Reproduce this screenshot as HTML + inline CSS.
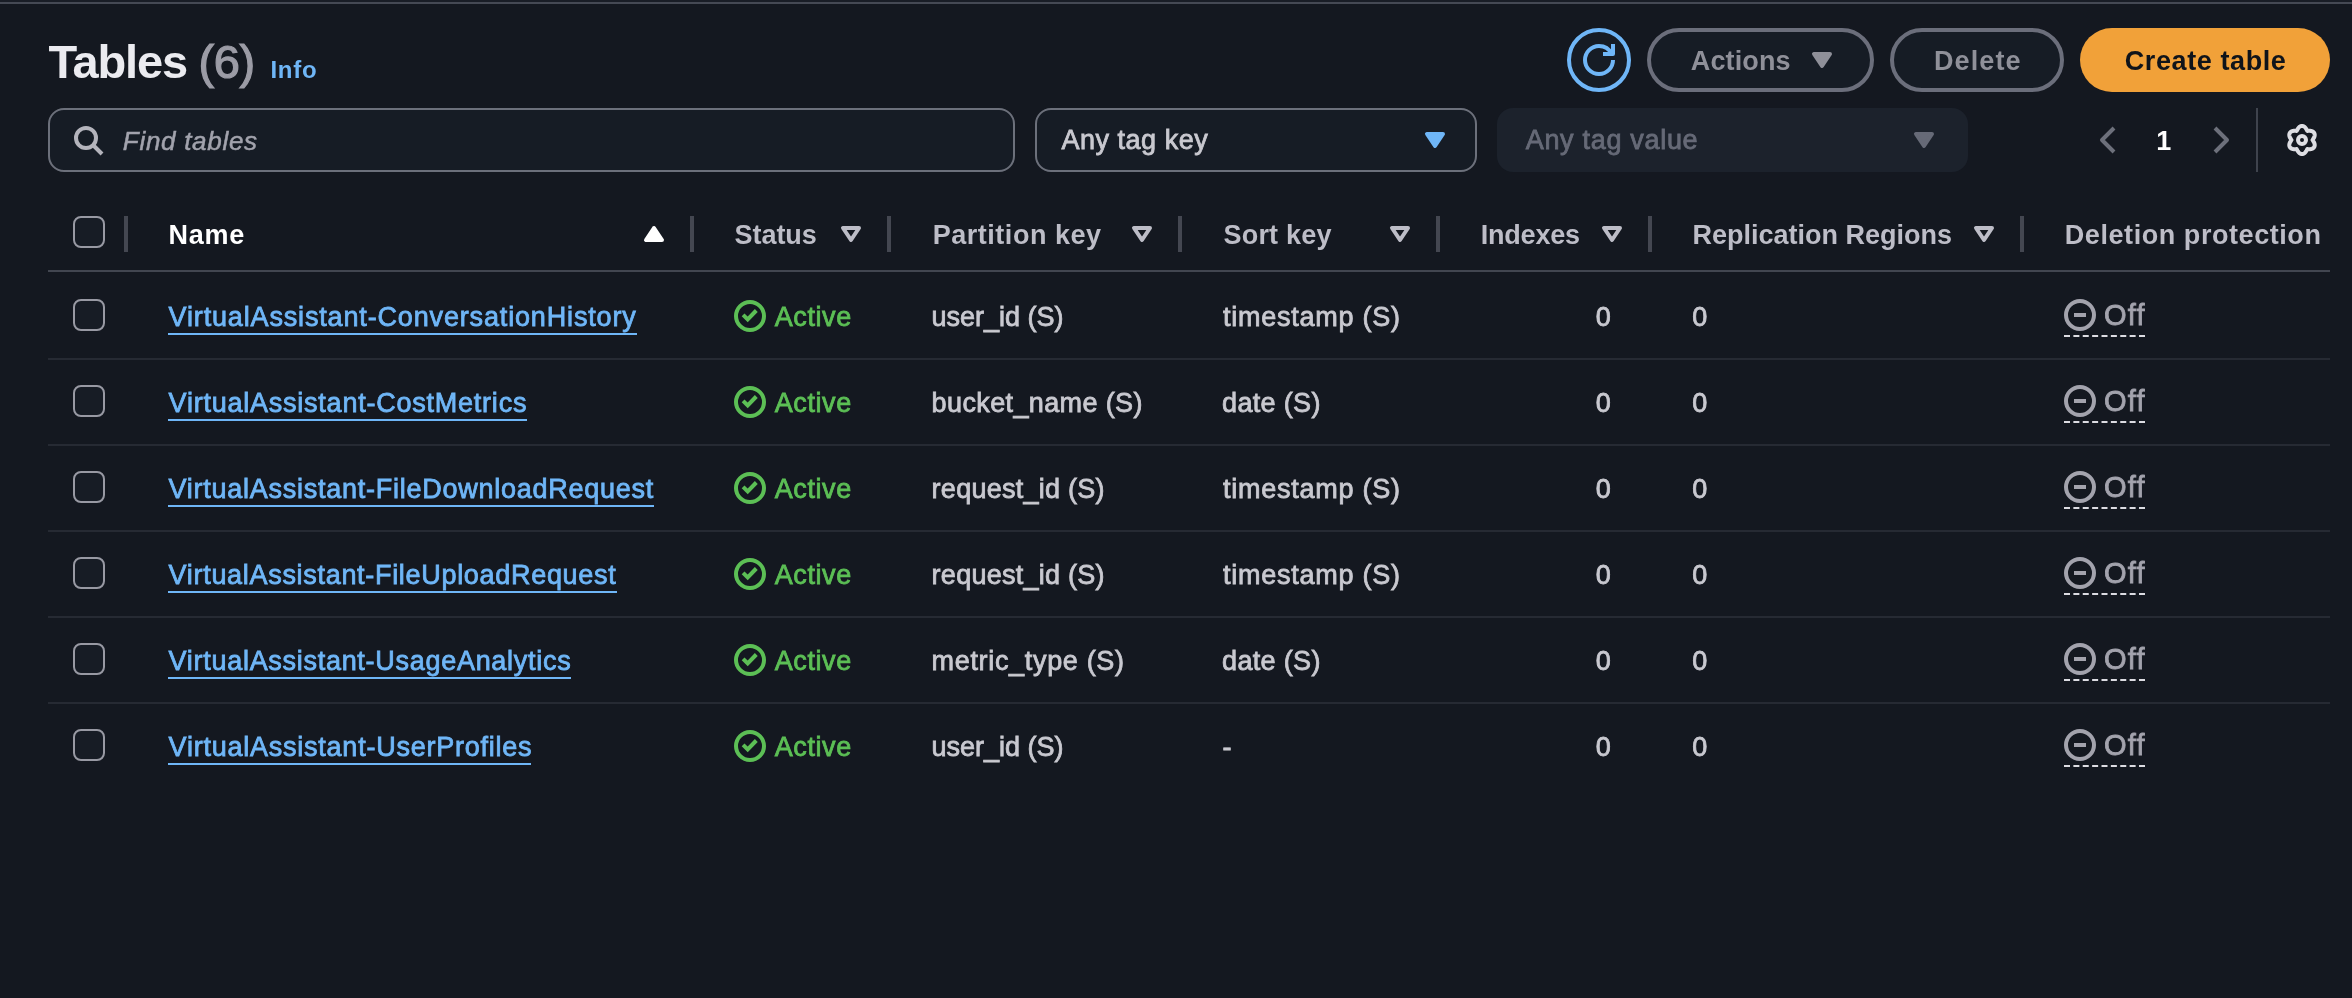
<!DOCTYPE html>
<html lang="en"><head><meta charset="utf-8"><title>Tables - DynamoDB</title>
<style>
html,body{margin:0;padding:0;}
body{width:2352px;height:998px;overflow:hidden;background:#141820;font-family:'Liberation Sans', sans-serif;position:relative;-webkit-font-smoothing:antialiased;}
.app{position:absolute;left:0;top:0;width:2352px;height:998px;will-change:transform;}
.tx{position:absolute;white-space:pre;margin:0;}
.bx,.ic{position:absolute;box-sizing:border-box;display:block;}
.lnk{text-decoration:none;}
.ul{position:absolute;height:2px;background:#6fb6f7;}
.cb{position:absolute;box-sizing:border-box;width:32px;height:32px;border:2px solid #9899a3;border-radius:8px;background:#171c25;}
.dv{position:absolute;width:4px;height:36px;top:216px;background:#444751;}
.rl{position:absolute;left:48px;width:2282px;height:2px;background:#262a33;}
.dash{position:absolute;height:0;border-top:2px dashed #dcdce2;}
</style></head><body><div class="app">
<div class="bx" style="left:0;top:0;width:2352px;height:2px;background:#191d26"></div>
<div class="bx" style="left:0;top:2px;width:2352px;height:2px;background:#454954"></div>
<!-- toolbar -->
<div class="bx" style="left:1567px;top:28px;width:64px;height:64px;border:4px solid #6fb6f7;border-radius:32px;background:#161c25"></div>
<svg class="ic" style="left:1583px;top:44px" width="32" height="32" viewBox="0 0 16 16" fill="none" stroke="#6fb6f7" stroke-width="2" stroke-linejoin="round" ><path d="M15 8c0 3.87-3.13 7-7 7s-7-3.13-7-7 3.13-7 7-7c2.79 0 5.2 1.63 6.33 4"/><path d="M10 5h5V0"/></svg>
<div class="bx" style="left:1647px;top:28px;width:227px;height:64px;border:4px solid #6b6e7b;border-radius:32px;background:#161c25"></div>
<svg class="ic" style="left:1806px;top:44px" width="32" height="32" viewBox="0 0 16 16" fill="none" stroke="#8f9099" stroke-width="2" stroke-linejoin="round" ><path d="M4 5h8l-4 6-4-6z" fill="#8f9099"/></svg>
<div class="bx" style="left:1890px;top:28px;width:174px;height:64px;border:4px solid #6b6e7b;border-radius:32px;background:#161c25"></div>
<div class="bx" style="left:2080px;top:28px;width:250px;height:64px;border-radius:32px;background:#f1a139"></div>
<!-- filters -->
<div class="bx" style="left:48px;top:108px;width:967px;height:64px;border:2px solid #6c707b;border-radius:16px;background:#161c25"></div>
<svg class="ic" style="left:72px;top:124px" width="32" height="32" viewBox="0 0 16 16" fill="none" stroke="#b4b4bc" stroke-width="2" stroke-linejoin="round" ><circle cx="7" cy="7" r="5"/><path d="m15 15-4.5-4.5"/></svg>
<div class="bx" style="left:1035px;top:108px;width:442px;height:64px;border:2px solid #6c707b;border-radius:16px;background:#161c25"></div>
<svg class="ic" style="left:1419px;top:124px" width="32" height="32" viewBox="0 0 16 16" fill="none" stroke="#6fb6f7" stroke-width="2" stroke-linejoin="round" ><path d="M4 5h8l-4 6-4-6z" fill="#6fb6f7"/></svg>
<div class="bx" style="left:1497px;top:108px;width:471px;height:64px;border-radius:16px;background:#1c222c"></div>
<svg class="ic" style="left:1908px;top:124px" width="32" height="32" viewBox="0 0 16 16" fill="none" stroke="#666a77" stroke-width="2" stroke-linejoin="round" ><path d="M4 5h8l-4 6-4-6z" fill="#666a77"/></svg>
<svg class="ic" style="left:2092px;top:124px" width="32" height="32" viewBox="0 0 16 16" fill="none" stroke="#6d707b" stroke-width="2" stroke-linejoin="round" stroke-linejoin="miter"><path d="M11 2 5 8l6 6"/></svg>
<svg class="ic" style="left:2204.5px;top:124px" width="32" height="32" viewBox="0 0 16 16" fill="none" stroke="#6d707b" stroke-width="2" stroke-linejoin="round" stroke-linejoin="miter"><path d="m5 2 6 6-6 6"/></svg>
<div class="bx" style="left:2256px;top:108px;width:2px;height:64px;background:#3f434d"></div>
<svg class="ic" style="left:2286px;top:124px" width="32" height="32" viewBox="0 0 16 16" fill="none" stroke="#dedee3" stroke-width="2" stroke-linejoin="round" ><path d="M13.25 8.00 L13.48 7.64 L13.75 7.24 L14.00 6.81 L14.20 6.34 L14.33 5.85 L14.36 5.37 L14.28 4.90 L14.11 4.48 L13.83 4.11 L13.46 3.81 L13.02 3.59 L12.54 3.46 L12.03 3.40 L11.53 3.40 L11.05 3.44 L10.62 3.45 L10.43 3.08 L10.22 2.64 L9.97 2.21 L9.66 1.80 L9.30 1.45 L8.90 1.18 L8.46 1.01 L8.00 0.95 L7.54 1.01 L7.10 1.18 L6.70 1.45 L6.34 1.80 L6.03 2.21 L5.78 2.64 L5.57 3.08 L5.38 3.45 L4.95 3.44 L4.47 3.40 L3.97 3.40 L3.46 3.46 L2.98 3.59 L2.54 3.81 L2.17 4.11 L1.89 4.48 L1.72 4.90 L1.64 5.37 L1.67 5.85 L1.80 6.34 L2.00 6.81 L2.25 7.24 L2.52 7.64 L2.75 8.00 L2.52 8.36 L2.25 8.76 L2.00 9.19 L1.80 9.66 L1.67 10.15 L1.64 10.63 L1.72 11.10 L1.89 11.52 L2.17 11.89 L2.54 12.19 L2.98 12.41 L3.46 12.54 L3.97 12.60 L4.47 12.60 L4.95 12.56 L5.37 12.55 L5.57 12.92 L5.78 13.36 L6.03 13.79 L6.34 14.20 L6.70 14.55 L7.10 14.82 L7.54 14.99 L8.00 15.05 L8.46 14.99 L8.90 14.82 L9.30 14.55 L9.66 14.20 L9.97 13.79 L10.22 13.36 L10.43 12.92 L10.62 12.55 L11.05 12.56 L11.53 12.60 L12.03 12.60 L12.54 12.54 L13.02 12.41 L13.46 12.19 L13.83 11.89 L14.11 11.53 L14.28 11.10 L14.36 10.63 L14.33 10.15 L14.20 9.66 L14.00 9.19 L13.75 8.76 L13.48 8.36Z"/><circle cx="8" cy="8" r="2"/></svg>
<div class="cb" style="left:73px;top:216px"></div>
<div class="dv" style="left:124px"></div>
<div class="dv" style="left:690px"></div>
<div class="dv" style="left:887px"></div>
<div class="dv" style="left:1178px"></div>
<div class="dv" style="left:1436px"></div>
<div class="dv" style="left:1648px"></div>
<div class="dv" style="left:2020px"></div>
<svg class="ic" style="left:638px;top:218px" width="32" height="32" viewBox="0 0 16 16" fill="none" stroke="#ffffff" stroke-width="2" stroke-linejoin="round" ><path d="M4 11h8L8 5l-4 6z" fill="#ffffff"/></svg>
<svg class="ic" style="left:835px;top:218px" width="32" height="32" viewBox="0 0 16 16" fill="none" stroke="#bdbdc7" stroke-width="2" stroke-linejoin="round" ><path d="M4 5h8l-4 6-4-6z"/></svg>
<svg class="ic" style="left:1126px;top:218px" width="32" height="32" viewBox="0 0 16 16" fill="none" stroke="#bdbdc7" stroke-width="2" stroke-linejoin="round" ><path d="M4 5h8l-4 6-4-6z"/></svg>
<svg class="ic" style="left:1384px;top:218px" width="32" height="32" viewBox="0 0 16 16" fill="none" stroke="#bdbdc7" stroke-width="2" stroke-linejoin="round" ><path d="M4 5h8l-4 6-4-6z"/></svg>
<svg class="ic" style="left:1596px;top:218px" width="32" height="32" viewBox="0 0 16 16" fill="none" stroke="#bdbdc7" stroke-width="2" stroke-linejoin="round" ><path d="M4 5h8l-4 6-4-6z"/></svg>
<svg class="ic" style="left:1968px;top:218px" width="32" height="32" viewBox="0 0 16 16" fill="none" stroke="#bdbdc7" stroke-width="2" stroke-linejoin="round" ><path d="M4 5h8l-4 6-4-6z"/></svg>
<div class="rl" style="top:270px;background:#424650"></div>
<div class="cb" style="left:73px;top:299.0px"></div>
<svg class="ic" style="left:734px;top:300.0px" width="32" height="32" viewBox="0 0 16 16" fill="none" stroke="#5cbf55" stroke-width="2"><circle cx="8" cy="8" r="7"/><path d="M4.55 7.45 L6.85 9.75 L11.15 5.25" stroke-linejoin="miter"/></svg>
<svg class="ic" style="left:2064px;top:299.0px" width="32" height="32" viewBox="0 0 16 16" fill="none" stroke="#a3a3ad" stroke-width="2"><circle cx="8" cy="8" r="7"/><path d="M5 8 H11"/></svg>
<div class="dash" style="left:2064px;width:81px;top:335.0px"></div>
<div class="rl" style="top:358px"></div>
<div class="cb" style="left:73px;top:385.0px"></div>
<svg class="ic" style="left:734px;top:386.0px" width="32" height="32" viewBox="0 0 16 16" fill="none" stroke="#5cbf55" stroke-width="2"><circle cx="8" cy="8" r="7"/><path d="M4.55 7.45 L6.85 9.75 L11.15 5.25" stroke-linejoin="miter"/></svg>
<svg class="ic" style="left:2064px;top:385.0px" width="32" height="32" viewBox="0 0 16 16" fill="none" stroke="#a3a3ad" stroke-width="2"><circle cx="8" cy="8" r="7"/><path d="M5 8 H11"/></svg>
<div class="dash" style="left:2064px;width:81px;top:421.0px"></div>
<div class="rl" style="top:444px"></div>
<div class="cb" style="left:73px;top:471.0px"></div>
<svg class="ic" style="left:734px;top:472.0px" width="32" height="32" viewBox="0 0 16 16" fill="none" stroke="#5cbf55" stroke-width="2"><circle cx="8" cy="8" r="7"/><path d="M4.55 7.45 L6.85 9.75 L11.15 5.25" stroke-linejoin="miter"/></svg>
<svg class="ic" style="left:2064px;top:471.0px" width="32" height="32" viewBox="0 0 16 16" fill="none" stroke="#a3a3ad" stroke-width="2"><circle cx="8" cy="8" r="7"/><path d="M5 8 H11"/></svg>
<div class="dash" style="left:2064px;width:81px;top:507.0px"></div>
<div class="rl" style="top:530px"></div>
<div class="cb" style="left:73px;top:557.0px"></div>
<svg class="ic" style="left:734px;top:558.0px" width="32" height="32" viewBox="0 0 16 16" fill="none" stroke="#5cbf55" stroke-width="2"><circle cx="8" cy="8" r="7"/><path d="M4.55 7.45 L6.85 9.75 L11.15 5.25" stroke-linejoin="miter"/></svg>
<svg class="ic" style="left:2064px;top:557.0px" width="32" height="32" viewBox="0 0 16 16" fill="none" stroke="#a3a3ad" stroke-width="2"><circle cx="8" cy="8" r="7"/><path d="M5 8 H11"/></svg>
<div class="dash" style="left:2064px;width:81px;top:593.0px"></div>
<div class="rl" style="top:616px"></div>
<div class="cb" style="left:73px;top:643.0px"></div>
<svg class="ic" style="left:734px;top:644.0px" width="32" height="32" viewBox="0 0 16 16" fill="none" stroke="#5cbf55" stroke-width="2"><circle cx="8" cy="8" r="7"/><path d="M4.55 7.45 L6.85 9.75 L11.15 5.25" stroke-linejoin="miter"/></svg>
<svg class="ic" style="left:2064px;top:643.0px" width="32" height="32" viewBox="0 0 16 16" fill="none" stroke="#a3a3ad" stroke-width="2"><circle cx="8" cy="8" r="7"/><path d="M5 8 H11"/></svg>
<div class="dash" style="left:2064px;width:81px;top:679.0px"></div>
<div class="rl" style="top:702px"></div>
<div class="cb" style="left:73px;top:729.0px"></div>
<svg class="ic" style="left:734px;top:730.0px" width="32" height="32" viewBox="0 0 16 16" fill="none" stroke="#5cbf55" stroke-width="2"><circle cx="8" cy="8" r="7"/><path d="M4.55 7.45 L6.85 9.75 L11.15 5.25" stroke-linejoin="miter"/></svg>
<svg class="ic" style="left:2064px;top:729.0px" width="32" height="32" viewBox="0 0 16 16" fill="none" stroke="#a3a3ad" stroke-width="2"><circle cx="8" cy="8" r="7"/><path d="M5 8 H11"/></svg>
<div class="dash" style="left:2064px;width:81px;top:765.0px"></div>
<span class="tx" style="left:48.40px;top:34px;font-size:47px;line-height:55px;letter-spacing:-1.140px;color:#ebebf0;font-weight:700;">Tables</span>
<span class="tx" style="left:198.50px;top:34px;font-size:47px;line-height:55px;letter-spacing:-0.450px;color:#9c9ca6;-webkit-text-stroke:1.2px;">(6)</span>
<span class="tx" style="left:270.40px;top:55px;font-size:24px;line-height:29px;letter-spacing:0.800px;color:#6fb6f7;font-weight:700;">Info</span>
<span class="tx" style="left:122.80px;top:125px;font-size:26px;line-height:32px;letter-spacing:0.710px;color:#a2a3ad;-webkit-text-stroke:0.5px;font-style:italic;">Find tables</span>
<span class="tx" style="left:1061.50px;top:124px;font-size:27px;line-height:32px;letter-spacing:0.510px;color:#c9c9d0;-webkit-text-stroke:0.8px;">Any tag key</span>
<span class="tx" style="left:1525.70px;top:124px;font-size:27px;line-height:32px;letter-spacing:0.692px;color:#666a77;-webkit-text-stroke:0.8px;">Any tag value</span>
<span class="tx" style="left:2156.30px;top:125px;font-size:27px;line-height:32px;letter-spacing:0.000px;color:#ffffff;font-weight:700;">1</span>
<span class="tx" style="left:1690.80px;top:45px;font-size:27px;line-height:32px;letter-spacing:0.117px;color:#8f9099;font-weight:700;">Actions</span>
<span class="tx" style="left:1933.90px;top:45px;font-size:27px;line-height:32px;letter-spacing:1.120px;color:#8f9099;font-weight:700;">Delete</span>
<span class="tx" style="left:2124.70px;top:45px;font-size:27px;line-height:32px;letter-spacing:0.600px;color:#10141a;font-weight:700;">Create table</span>
<span class="tx" style="left:168.60px;top:219px;font-size:27px;line-height:32px;letter-spacing:0.733px;color:#ffffff;font-weight:700;">Name</span>
<span class="tx" style="left:734.60px;top:219px;font-size:27px;line-height:32px;letter-spacing:-0.060px;color:#bdbdc7;font-weight:700;">Status</span>
<span class="tx" style="left:932.70px;top:219px;font-size:27px;line-height:32px;letter-spacing:0.525px;color:#bdbdc7;font-weight:700;">Partition key</span>
<span class="tx" style="left:1223.50px;top:219px;font-size:27px;line-height:32px;letter-spacing:0.200px;color:#bdbdc7;font-weight:700;">Sort key</span>
<span class="tx" style="left:1480.70px;top:219px;font-size:27px;line-height:32px;letter-spacing:-0.200px;color:#bdbdc7;font-weight:700;">Indexes</span>
<span class="tx" style="left:1692.60px;top:219px;font-size:27px;line-height:32px;letter-spacing:-0.006px;color:#bdbdc7;font-weight:700;">Replication Regions</span>
<span class="tx" style="left:2064.80px;top:219px;font-size:27px;line-height:32px;letter-spacing:0.561px;color:#bdbdc7;font-weight:700;">Deletion protection</span>
<a class="tx lnk" style="left:168.60px;top:301px;font-size:27px;line-height:32px;letter-spacing:0.843px;color:#6fb6f7;-webkit-text-stroke:0.8px;">VirtualAssistant-ConversationHistory</a>
<div class="ul" style="left:168.1px;width:468.5px;top:333px"></div>
<span class="tx" style="left:774.70px;top:301px;font-size:27px;line-height:32px;letter-spacing:0.600px;color:#5cbf55;-webkit-text-stroke:0.8px;">Active</span>
<span class="tx" style="left:931.60px;top:301px;font-size:27px;line-height:32px;letter-spacing:-0.020px;color:#c9c9d0;-webkit-text-stroke:0.8px;">user_id (S)</span>
<span class="tx" style="left:1223.10px;top:301px;font-size:27px;line-height:32px;letter-spacing:0.742px;color:#c9c9d0;-webkit-text-stroke:0.8px;">timestamp (S)</span>
<span class="tx" style="left:1595.80px;top:301px;font-size:27px;line-height:32px;letter-spacing:0.000px;color:#c9c9d0;-webkit-text-stroke:0.8px;">0</span>
<span class="tx" style="left:1692.30px;top:301px;font-size:27px;line-height:32px;letter-spacing:0.000px;color:#c9c9d0;-webkit-text-stroke:0.8px;">0</span>
<span class="tx" style="left:2103.90px;top:298px;font-size:29px;line-height:34px;letter-spacing:1.300px;color:#a3a3ad;-webkit-text-stroke:0.8px;">Off</span>
<a class="tx lnk" style="left:168.60px;top:387px;font-size:27px;line-height:32px;letter-spacing:0.767px;color:#6fb6f7;-webkit-text-stroke:0.8px;">VirtualAssistant-CostMetrics</a>
<div class="ul" style="left:168.1px;width:358.7px;top:419px"></div>
<span class="tx" style="left:774.70px;top:387px;font-size:27px;line-height:32px;letter-spacing:0.600px;color:#5cbf55;-webkit-text-stroke:0.8px;">Active</span>
<span class="tx" style="left:931.60px;top:387px;font-size:27px;line-height:32px;letter-spacing:0.379px;color:#c9c9d0;-webkit-text-stroke:0.8px;">bucket_name (S)</span>
<span class="tx" style="left:1222.10px;top:387px;font-size:27px;line-height:32px;letter-spacing:0.329px;color:#c9c9d0;-webkit-text-stroke:0.8px;">date (S)</span>
<span class="tx" style="left:1595.80px;top:387px;font-size:27px;line-height:32px;letter-spacing:0.000px;color:#c9c9d0;-webkit-text-stroke:0.8px;">0</span>
<span class="tx" style="left:1692.30px;top:387px;font-size:27px;line-height:32px;letter-spacing:0.000px;color:#c9c9d0;-webkit-text-stroke:0.8px;">0</span>
<span class="tx" style="left:2103.90px;top:384px;font-size:29px;line-height:34px;letter-spacing:1.300px;color:#a3a3ad;-webkit-text-stroke:0.8px;">Off</span>
<a class="tx lnk" style="left:168.60px;top:473px;font-size:27px;line-height:32px;letter-spacing:0.740px;color:#6fb6f7;-webkit-text-stroke:0.8px;">VirtualAssistant-FileDownloadRequest</a>
<div class="ul" style="left:168.1px;width:485.9px;top:505px"></div>
<span class="tx" style="left:774.70px;top:473px;font-size:27px;line-height:32px;letter-spacing:0.600px;color:#5cbf55;-webkit-text-stroke:0.8px;">Active</span>
<span class="tx" style="left:931.60px;top:473px;font-size:27px;line-height:32px;letter-spacing:0.262px;color:#c9c9d0;-webkit-text-stroke:0.8px;">request_id (S)</span>
<span class="tx" style="left:1223.10px;top:473px;font-size:27px;line-height:32px;letter-spacing:0.742px;color:#c9c9d0;-webkit-text-stroke:0.8px;">timestamp (S)</span>
<span class="tx" style="left:1595.80px;top:473px;font-size:27px;line-height:32px;letter-spacing:0.000px;color:#c9c9d0;-webkit-text-stroke:0.8px;">0</span>
<span class="tx" style="left:1692.30px;top:473px;font-size:27px;line-height:32px;letter-spacing:0.000px;color:#c9c9d0;-webkit-text-stroke:0.8px;">0</span>
<span class="tx" style="left:2103.90px;top:470px;font-size:29px;line-height:34px;letter-spacing:1.300px;color:#a3a3ad;-webkit-text-stroke:0.8px;">Off</span>
<a class="tx lnk" style="left:168.60px;top:559px;font-size:27px;line-height:32px;letter-spacing:0.694px;color:#6fb6f7;-webkit-text-stroke:0.8px;">VirtualAssistant-FileUploadRequest</a>
<div class="ul" style="left:168.1px;width:448.9px;top:591px"></div>
<span class="tx" style="left:774.70px;top:559px;font-size:27px;line-height:32px;letter-spacing:0.600px;color:#5cbf55;-webkit-text-stroke:0.8px;">Active</span>
<span class="tx" style="left:931.60px;top:559px;font-size:27px;line-height:32px;letter-spacing:0.262px;color:#c9c9d0;-webkit-text-stroke:0.8px;">request_id (S)</span>
<span class="tx" style="left:1223.10px;top:559px;font-size:27px;line-height:32px;letter-spacing:0.742px;color:#c9c9d0;-webkit-text-stroke:0.8px;">timestamp (S)</span>
<span class="tx" style="left:1595.80px;top:559px;font-size:27px;line-height:32px;letter-spacing:0.000px;color:#c9c9d0;-webkit-text-stroke:0.8px;">0</span>
<span class="tx" style="left:1692.30px;top:559px;font-size:27px;line-height:32px;letter-spacing:0.000px;color:#c9c9d0;-webkit-text-stroke:0.8px;">0</span>
<span class="tx" style="left:2103.90px;top:556px;font-size:29px;line-height:34px;letter-spacing:1.300px;color:#a3a3ad;-webkit-text-stroke:0.8px;">Off</span>
<a class="tx lnk" style="left:168.60px;top:645px;font-size:27px;line-height:32px;letter-spacing:0.713px;color:#6fb6f7;-webkit-text-stroke:0.8px;">VirtualAssistant-UsageAnalytics</a>
<div class="ul" style="left:168.1px;width:403.4px;top:677px"></div>
<span class="tx" style="left:774.70px;top:645px;font-size:27px;line-height:32px;letter-spacing:0.600px;color:#5cbf55;-webkit-text-stroke:0.8px;">Active</span>
<span class="tx" style="left:931.60px;top:645px;font-size:27px;line-height:32px;letter-spacing:0.671px;color:#c9c9d0;-webkit-text-stroke:0.8px;">metric_type (S)</span>
<span class="tx" style="left:1222.10px;top:645px;font-size:27px;line-height:32px;letter-spacing:0.329px;color:#c9c9d0;-webkit-text-stroke:0.8px;">date (S)</span>
<span class="tx" style="left:1595.80px;top:645px;font-size:27px;line-height:32px;letter-spacing:0.000px;color:#c9c9d0;-webkit-text-stroke:0.8px;">0</span>
<span class="tx" style="left:1692.30px;top:645px;font-size:27px;line-height:32px;letter-spacing:0.000px;color:#c9c9d0;-webkit-text-stroke:0.8px;">0</span>
<span class="tx" style="left:2103.90px;top:642px;font-size:29px;line-height:34px;letter-spacing:1.300px;color:#a3a3ad;-webkit-text-stroke:0.8px;">Off</span>
<a class="tx lnk" style="left:168.60px;top:731px;font-size:27px;line-height:32px;letter-spacing:0.764px;color:#6fb6f7;-webkit-text-stroke:0.8px;">VirtualAssistant-UserProfiles</a>
<div class="ul" style="left:168.1px;width:363.4px;top:763px"></div>
<span class="tx" style="left:774.70px;top:731px;font-size:27px;line-height:32px;letter-spacing:0.600px;color:#5cbf55;-webkit-text-stroke:0.8px;">Active</span>
<span class="tx" style="left:931.60px;top:731px;font-size:27px;line-height:32px;letter-spacing:-0.020px;color:#c9c9d0;-webkit-text-stroke:0.8px;">user_id (S)</span>
<span class="tx" style="left:1222.50px;top:731px;font-size:27px;line-height:32px;letter-spacing:0.000px;color:#c9c9d0;-webkit-text-stroke:0.8px;">-</span>
<span class="tx" style="left:1595.80px;top:731px;font-size:27px;line-height:32px;letter-spacing:0.000px;color:#c9c9d0;-webkit-text-stroke:0.8px;">0</span>
<span class="tx" style="left:1692.30px;top:731px;font-size:27px;line-height:32px;letter-spacing:0.000px;color:#c9c9d0;-webkit-text-stroke:0.8px;">0</span>
<span class="tx" style="left:2103.90px;top:728px;font-size:29px;line-height:34px;letter-spacing:1.300px;color:#a3a3ad;-webkit-text-stroke:0.8px;">Off</span>
</div></body></html>
